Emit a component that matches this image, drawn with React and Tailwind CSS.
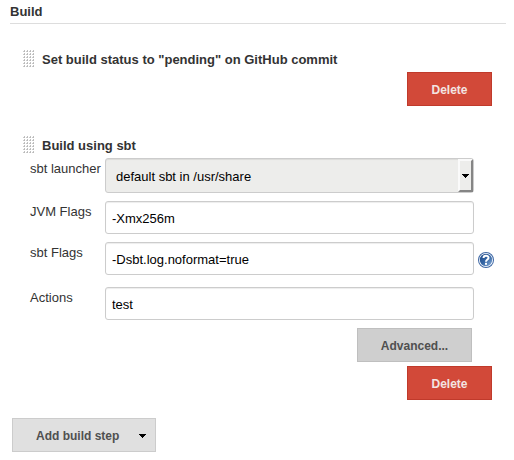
import React from "react";

const baseButton =
  "h-[34px] border pt-0.5 text-xs font-bold leading-4 whitespace-nowrap cursor-pointer";

function Grip() {
  const dots = [];
  for (let row = 0; row < 6; row++) {
    for (let col = 0; col < 4; col++) {
      dots.push([col * 3, row * 3]);
    }
  }
  return (
    <svg className="h-[17px] w-[11px] shrink-0 cursor-move" viewBox="0 0 11 17" shapeRendering="crispEdges" aria-hidden="true">
      {dots.map(([x, y]) => (
        <g key={`${x}-${y}`}>
          <rect x={x + 1} y={y} width="1" height="1" fill="#c0c0c0" />
          <rect x={x} y={y + 1} width="1" height="1" fill="#cccccc" />
          <rect x={x + 1} y={y + 1} width="1" height="1" fill="#b8b8b8" />
        </g>
      ))}
    </svg>
  );
}

function Caret() {
  return (
    <svg className="h-1 w-[7px]" viewBox="0 0 7 4" shapeRendering="crispEdges" aria-hidden="true">
      <path d="M0 0H7V1H6V2H5V3H4V4H3V3H2V2H1V1H0Z" fill="#000000" />
    </svg>
  );
}

function StepTitle({ children }) {
  return (
    <div className="flex items-center gap-2 pl-[13px]">
      <Grip />
      <h3 className="pt-0.5 font-bold leading-[17px]">{children}</h3>
    </div>
  );
}

function DeleteButton() {
  return (
    <button type="button" className={`${baseButton} w-[85px] border-[#c03a2b] bg-[#d24939] text-[#f3e4e2]`}>
      Delete
    </button>
  );
}

function HelpIcon() {
  return (
    <svg className="block size-4" viewBox="0 0 16 16" aria-hidden="true">
      <defs>
        <linearGradient id="helpFill" x1="0" y1="0" x2="1" y2="1">
          <stop offset="0" stopColor="#204a87" />
          <stop offset="0.5" stopColor="#3465a4" />
          <stop offset="1" stopColor="#8fb3dc" />
        </linearGradient>
      </defs>
      <circle cx="8" cy="8" r="8" fill="#3c66a4" />
      <circle cx="8" cy="8" r="7" fill="#ffffff" />
      <circle cx="8" cy="8" r="6.2" fill="url(#helpFill)" />
      <path d="M5.5 6C5.5 2.9 10.6 2.9 10.5 5.9C10.4 7.6 8 7.6 8 9.8" fill="none" stroke="#ffffff" strokeWidth="2" />
      <rect x="7" y="10.8" width="2" height="2" fill="#ffffff" />
    </svg>
  );
}

function Field({ id, label, help, children }) {
  return (
    <div className="flex items-start">
      <label htmlFor={id} className="w-[75px] shrink-0 pt-px leading-5 whitespace-nowrap">
        {label}
      </label>
      <div className="min-w-0 flex-1">{children}</div>
      <div className="ml-1 w-4 shrink-0 self-center pt-0.5">
        {help && (
          <button type="button" aria-label={`Help for ${label}`} className="block cursor-pointer">
            <HelpIcon />
          </button>
        )}
      </div>
    </div>
  );
}

function TextInput({ id, value }) {
  return (
    <input
      id={id}
      type="text"
      defaultValue={value}
      className="block h-[33px] w-full rounded-[3px] border border-[#cccccc] bg-white px-1.5 pt-0.5 text-black shadow-[inset_0_1px_1px_rgba(0,0,0,0.075)]"
    />
  );
}

export default function App() {
  return (
    <main className="bg-white pr-2 pb-2 pl-2.5 font-['Liberation_Sans',Arial,sans-serif] text-[13px] text-[#333333]">
      <h2 className="border-b border-[#dddddd] pt-1 pb-1 font-bold leading-[15px]">Build</h2>

      <section className="pt-[25px] pr-3.5">
        <StepTitle>Set build status to "pending" on GitHub commit</StepTitle>
        <div className="flex justify-end pt-1">
          <DeleteButton />
        </div>
      </section>

      <section className="pt-[29px] pr-3">
        <StepTitle>Build using sbt</StepTitle>
        <div className="flex flex-col gap-2 pt-1 pl-5">
          <Field id="launcher" label="sbt launcher">
            <div className="relative">
              <select
                id="launcher"
                defaultValue="default"
                className="block h-[35px] w-full appearance-none rounded-[3px] border border-[#cccccc] bg-[#ededeb] pr-5 pl-2.5 pt-0.5 text-black shadow-[inset_0_1px_1px_rgba(0,0,0,0.075)]"
              >
                <option value="default">default sbt in /usr/share</option>
              </select>
              <span className="pointer-events-none absolute top-px right-px bottom-px flex w-[15px] items-center justify-center border-2 border-t-[#fafafa] border-r-[#858585] border-b-[#858585] border-l-[#fafafa] bg-[#ededeb]">
                <Caret />
              </span>
            </div>
          </Field>
          <Field id="jvm" label="JVM Flags">
            <TextInput id="jvm" value="-Xmx256m" />
          </Field>
          <Field id="flags" label="sbt Flags" help>
            <TextInput id="flags" value="-Dsbt.log.noformat=true" />
          </Field>
          <div className="pt-1">
            <Field id="actions" label="Actions">
              <TextInput id="actions" value="test" />
            </Field>
          </div>
          <div className="flex justify-end pr-[22px]">
            <button type="button" className={`${baseButton} w-[115px] border-[#bfbfbf] bg-[#cfcfcf] text-[#505050]`}>
              Advanced...
            </button>
          </div>
        </div>
        <div className="flex justify-end pt-1 pr-0.5">
          <DeleteButton />
        </div>
      </section>

      <div className="pt-[18px] pl-0.5">
        <button
          type="button"
          className={`${baseButton} flex items-center gap-5 border-[#cccccc] bg-[#e0e0e0] pr-[9px] pl-[23px] text-[#505050]`}
        >
          Add build step
          <Caret />
        </button>
      </div>
    </main>
  );
}
